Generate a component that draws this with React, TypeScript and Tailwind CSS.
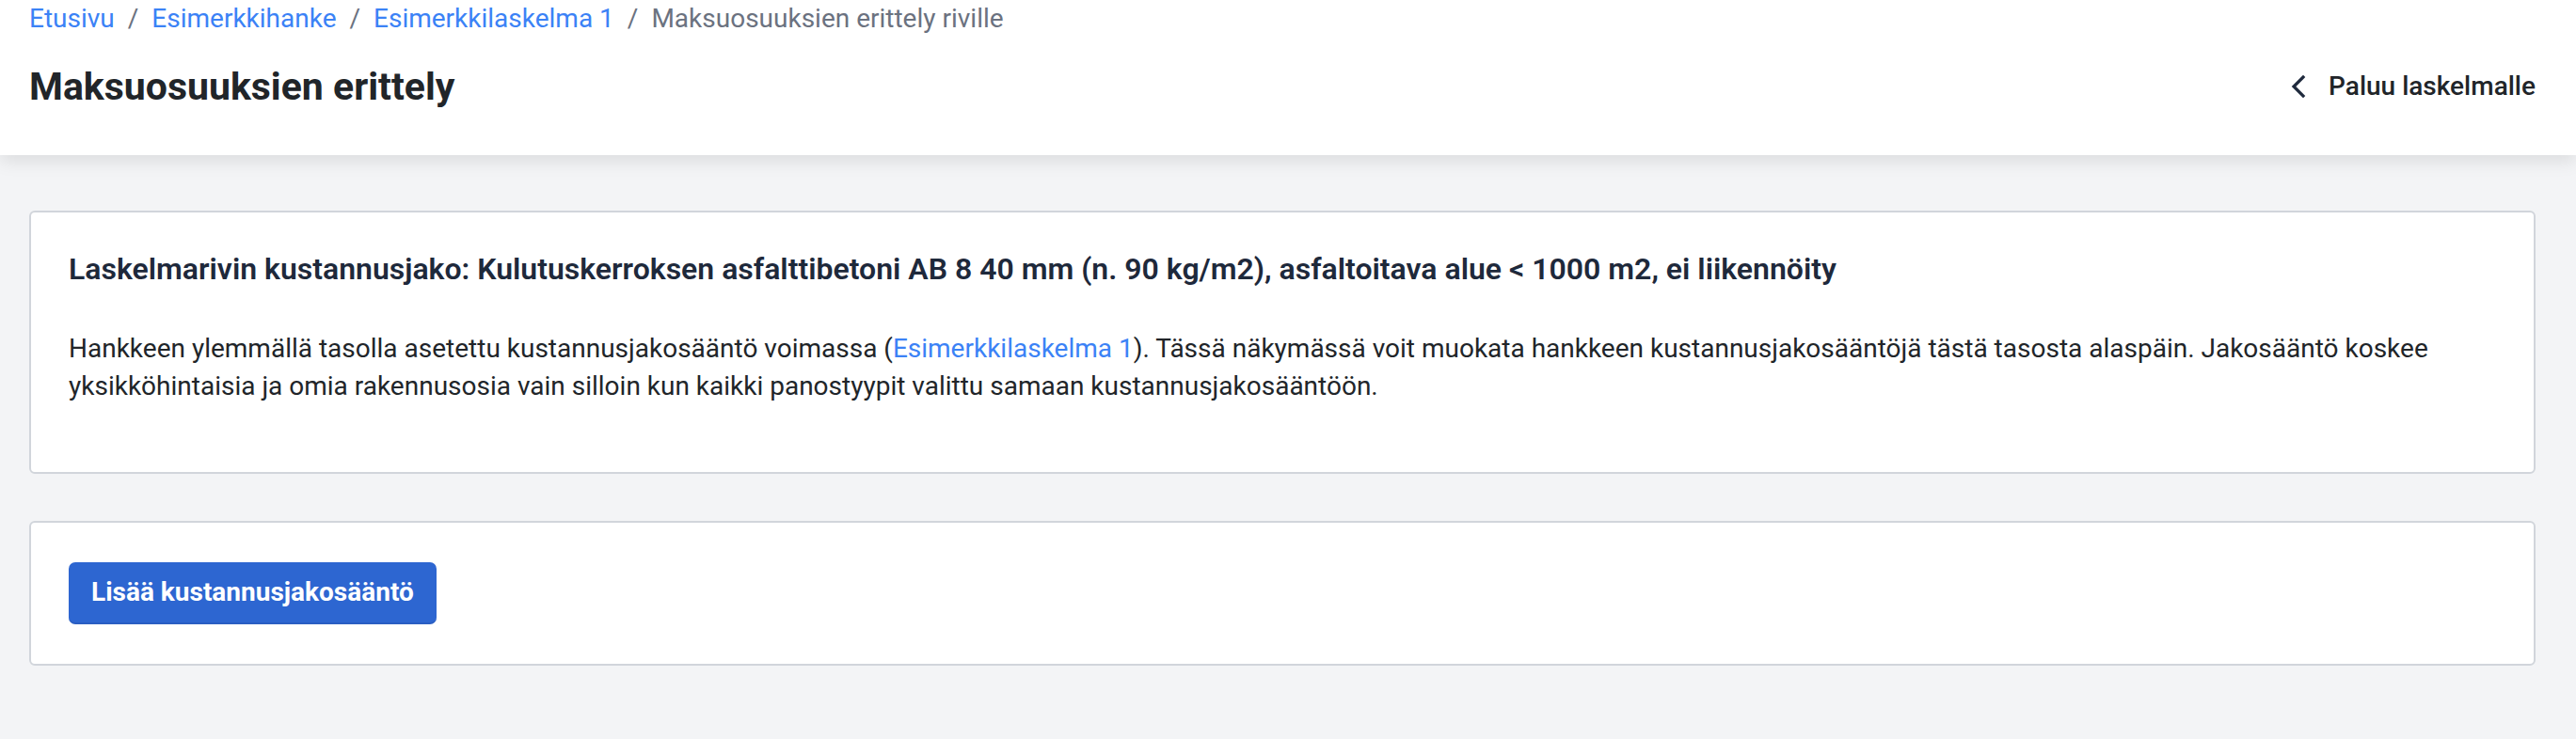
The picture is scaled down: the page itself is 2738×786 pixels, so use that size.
import React from 'react';

const font = { fontFamily: 'Roboto, "Noto Sans", Arial, sans-serif' };

const crumbs = [
  { label: 'Etusivu', href: '#' },
  { label: 'Esimerkkihanke', href: '#' },
  { label: 'Esimerkkilaskelma 1', href: '#' },
  { label: 'Maksuosuuksien erittely riville' },
];

const ChevronLeft: React.FC = () => (
  <svg width="16" height="24" viewBox="0 0 16 24" fill="none" className="text-[#1f2a3d]">
    <path d="M13 2 L3 12 L13 22" stroke="currentColor" strokeWidth="3.2" strokeLinecap="square" strokeLinejoin="miter" />
  </svg>
);

const Breadcrumbs: React.FC = () => (
  <nav className="flex items-center text-[28px] leading-[40px]">
    {crumbs.map((c, i) => (
      <React.Fragment key={c.label}>
        {i > 0 && <span className="mx-[14px] text-[#6b7280]">/</span>}
        {c.href ? (
          <a href={c.href} className="text-[#3b82f6]">{c.label}</a>
        ) : (
          <span className="text-[#6b7280]">{c.label}</span>
        )}
      </React.Fragment>
    ))}
  </nav>
);

export default function App() {
  return (
    <div style={font} className="min-h-screen bg-[#f3f4f6]">
      {/* Yläpalkki */}
      <header className="relative z-10 bg-white pl-[31px] pr-[43px] pb-[40px] shadow-[0_6px_18px_rgba(0,0,0,0.10)]">
        <Breadcrumbs />
        <div className="mt-[19px] flex items-center justify-between">
          <h1 className="text-[41px] leading-[66px] font-bold text-[#212529]">Maksuosuuksien erittely</h1>
          <a href="#" className="flex items-center gap-[24px] text-[28px] font-medium text-[#212529]">
            <ChevronLeft />
            Paluu laskelmalle
          </a>
        </div>
      </header>

      <main className="pl-[31px] pr-[43px] pt-[59px] pb-[76px] flex flex-col gap-[50px]">
        {/* Laskelmarivin tiedot */}
        <section className="bg-white border-2 border-[#d1d5db] rounded-[6px] px-10 pt-10 pb-[71px]">
          <h2 className="text-[32px] leading-[40px] font-semibold text-[#1e293b]">
            Laskelmarivin kustannusjako: Kulutuskerroksen asfalttibetoni AB 8 40 mm (n. 90 kg/m2), asfaltoitava alue &lt; 1000 m2, ei liikennöity
          </h2>
          <p className="mt-[45px] text-[28px] leading-[40px] text-[#212529]">
            Hankkeen ylemmällä tasolla asetettu kustannusjakosääntö voimassa (
            <a href="#" className="text-[#3b82f6]">Esimerkkilaskelma 1</a>
            ). Tässä näkymässä voit muokata hankkeen kustannusjakosääntöjä tästä tasosta alaspäin. Jakosääntö koskee
            yksikköhintaisia ja omia rakennusosia vain silloin kun kaikki panostyypit valittu samaan kustannusjakosääntöön.
          </p>
        </section>

        {/* Jakosäännöt */}
        <section className="bg-white border-2 border-[#d1d5db] rounded-[6px] px-10 py-[42px]">
          <button className="h-[66px] px-[24px] rounded-[7px] bg-[#2d66d1] border-b-2 border-[#2a5ec2] text-white text-[28px] font-bold">
            Lisää kustannusjakosääntö
          </button>
        </section>
      </main>
    </div>
  );
}
